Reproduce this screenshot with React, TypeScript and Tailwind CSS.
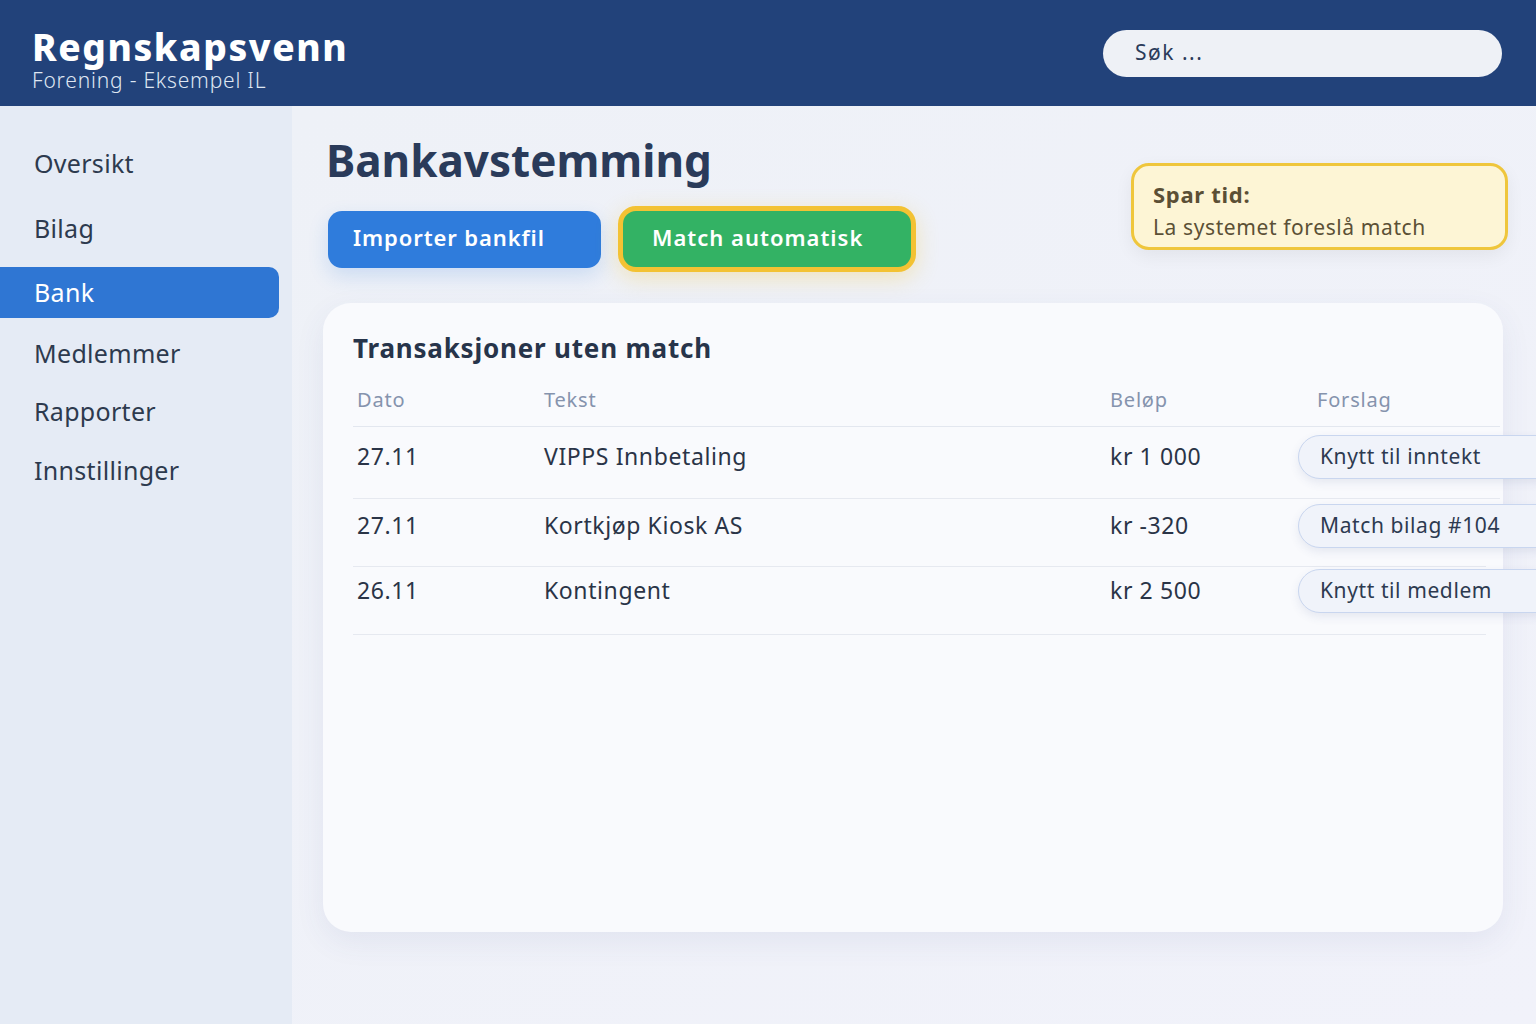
import React from "react";

const navItems = [
  { label: "Oversikt", gap: "mt-0" },
  { label: "Bilag", gap: "mt-[13px]" },
  { label: "Bank", gap: "mt-[12px]" },
  { label: "Medlemmer", gap: "mt-[10px]" },
  { label: "Rapporter", gap: "mt-[6px]" },
  { label: "Innstillinger", gap: "mt-[7px]" },
];

const rows = [
  { dato: "27.11", tekst: "VIPPS Innbetaling", belop: "kr 1 000", forslag: "Knytt til inntekt", row: "h-[72px] pt-[7px]" },
  { dato: "27.11", tekst: "Kortkjøp Kiosk AS", belop: "kr -320", forslag: "Match bilag #104", row: "h-[68px] pt-[4px]" },
  { dato: "26.11", tekst: "Kontingent", belop: "kr 2 500", forslag: "Knytt til medlem", row: "h-[68px] pt-[1px]" },
];

export default function App() {
  return (
    <div className="w-[1536px] h-[1024px] overflow-hidden flex flex-col bg-[#eef1f7] font-['Noto_Sans',_'Open_Sans',_sans-serif]">
      {/* Header */}
      <header className="h-[106px] shrink-0 bg-[#22427a] flex items-center justify-between pl-[32px] pr-[34px]">
        <div className="flex flex-col pt-[14px]">
          <h1 className="text-[37px] leading-[36px] font-extrabold text-white tracking-[1.6px]">Regnskapsvenn</h1>
          <p className="mt-[4px] text-[21px] leading-[22px] text-[#dfe6f2] font-light tracking-[0.8px]">Forening - Eksempel IL</p>
        </div>
        <div className="w-[399px] h-[47px] rounded-full bg-[#eef1f6] flex items-center pl-[32px] text-[21px] text-[#2a3b5a] tracking-[1.5px]">
          Søk ...
        </div>
      </header>

      <div className="flex flex-1">
        {/* Sidebar */}
        <aside className="w-[292px] shrink-0 bg-[#e5ebf5] pt-[32px] pr-[13px] flex flex-col">
          {navItems.map((item) => (
            <div
              key={item.label}
              className={
                item.label === "Bank"
                  ? `${item.gap} h-[51px] flex items-center pl-[34px] text-[25px] tracking-[0.3px] text-white bg-[#2f76d3] rounded-r-[10px]`
                  : `${item.gap} h-[52px] flex items-center pl-[34px] text-[25px] tracking-[0.3px] text-[#2d3a4e]`
              }
            >
              {item.label}
            </div>
          ))}
        </aside>

        {/* Main */}
        <main className="flex-1 pl-[36px] pr-[28px] pt-[28px] bg-gradient-to-br from-[#eef1f7] to-[#f1f2fa]">
          <div className="flex justify-between">
            <div>
              <h2 className="text-[44px] leading-[52px] font-bold text-[#2a3b5a] -ml-[2px]">Bankavstemming</h2>
              <div className="flex items-center gap-[17px] mt-[20px] h-[66px]">
                <button className="w-[273px] h-[57px] rounded-[14px] bg-[#2f7cdc] text-white text-[22px] font-semibold text-left pl-[25px] pb-[3px] shadow-[0_8px_20px_rgba(47,124,220,0.18)] tracking-[0.9px]">
                  Importer bankfil
                </button>
                <button className="w-[298px] h-[66px] rounded-[18px] border-[5px] border-[#f3c233] bg-[#33b264] text-white text-[22px] font-semibold text-left pl-[29px] pb-[3px] shadow-[0_6px_22px_rgba(243,194,51,0.3)] tracking-[1px]">
                  Match automatisk
                </button>
              </div>
            </div>
            <div className="mt-[29px] w-[377px] h-[87px] rounded-[18px] border-[3px] border-[#efc63c] bg-[#fdf5d5] pl-[19px] pt-[14px] shadow-[0_6px_18px_rgba(0,0,0,0.06)]">
              <p className="text-[22px] leading-[28px] font-bold text-[#5b4f35] tracking-[0.7px]">Spar tid:</p>
              <p className="text-[21px] leading-[28px] text-[#5b5035] mt-[5px] tracking-[0.6px]">La systemet foreslå match</p>
            </div>
          </div>

          {/* Card */}
          <section className="-ml-[5px] mt-[31px] w-[1180px] h-[629px] rounded-[28px] bg-[#f9fafd] shadow-[0_10px_30px_rgba(60,80,140,0.08)] pl-[30px] pr-[3px] pt-[28px]">
            <h3 className="text-[26px] leading-[34px] font-bold text-[#27344a] tracking-[0.8px]">Transaksjoner uten match</h3>
            <div className="mt-[20px]">
              <div className="grid grid-cols-[191px_566px_188px_1fr] h-[42px] items-center pb-[12px] border-b border-[#e3e7ef] text-[20px] text-[#8593ad] tracking-[0.8px]">
                <span className="pl-[4px]">Dato</span>
                <span>Tekst</span>
                <span>Beløp</span>
                <span className="pl-[19px]">Forslag</span>
              </div>
              {rows.map((r, i) => (
                <div
                  key={i}
                  className={`${r.row} border-b border-[#e6e9f0] ${i > 0 ? "mr-[14px]" : ""}`}
                >
                  <div className="grid grid-cols-[191px_566px_188px_1fr] h-[46px] items-center text-[23px] text-[#2a3447] tracking-[0.6px]">
                    <span className="pl-[4px] pb-[2px]">{r.dato}</span>
                    <span className="pb-[2px]">{r.tekst}</span>
                    <span className="pb-[2px]">{r.belop}</span>
                    <span className="w-[260px] h-[44px] rounded-full border border-[#c9d6ef] bg-[#f0f3fa] shadow-[0_4px_10px_rgba(60,80,140,0.1)] flex items-center pl-[21px] text-[21px] text-[#2d3a50] whitespace-nowrap tracking-[0.6px]">
                      {r.forslag}
                    </span>
                  </div>
                </div>
              ))}
            </div>
          </section>
        </main>
      </div>
    </div>
  );
}
